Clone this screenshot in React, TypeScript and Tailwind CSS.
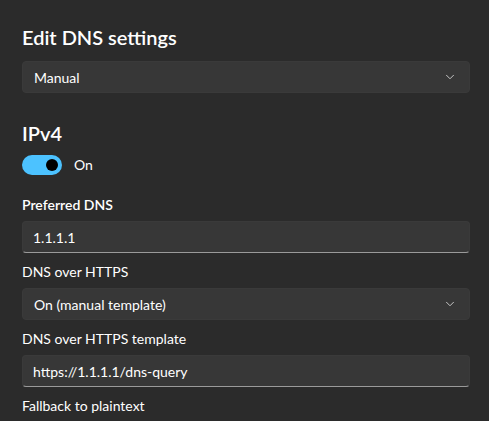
import { ChevronDown } from 'lucide-react';

const font = { fontFamily: 'Lato, "Noto Sans", sans-serif' };

function Select({ value }: { value: string }) {
  return (
    <div className="flex h-[32px] items-center justify-between rounded-[4px] border border-[#3a3a3a] bg-[#373737] pl-[11px] pr-[12px] text-[14px] text-[#ffffff]">
      <span>{value}</span>
      <ChevronDown size={14} strokeWidth={1.6} className="text-[#d0d0d0]" />
    </div>
  );
}

function TextBox({ value }: { value: string }) {
  return (
    <div className="flex h-[32px] items-center rounded-[4px] border border-[#3a3a3a] border-b-[#9a9a9a] bg-[#373737] px-[10px] text-[14px] text-[#ffffff]">
      {value}
    </div>
  );
}

export default function App() {
  return (
    <div className="h-[421px] w-[489px] overflow-hidden bg-[#2b2b2b] pl-[22px] pr-[19px] pt-[23px] text-white" style={font}>
      <h1 className="text-[20px] font-semibold leading-[28px]">Edit DNS settings</h1>
      <div className="mt-[10px]">
        <Select value="Manual" />
      </div>

      <h2 className="mt-[26px] text-[20px] font-semibold leading-[28px]">IPv4</h2>
      <div className="mt-[8px] flex items-center gap-[12px]">
        <div className="flex h-[20px] w-[40px] items-center justify-end rounded-full bg-[#4cc2ff] pr-[4px]">
          <div className="h-[12px] w-[12px] rounded-full bg-black" />
        </div>
        <span className="text-[14px] leading-[20px]">On</span>
      </div>

      <div className="mt-[20px] text-[14px] font-semibold leading-[20px]">Preferred DNS</div>
      <div className="mt-[6px]">
        <TextBox value="1.1.1.1" />
      </div>

      <div className="mt-[9px] text-[14px] leading-[20px]">DNS over HTTPS</div>
      <div className="mt-[6px]">
        <Select value="On (manual template)" />
      </div>

      <div className="mt-[9px] text-[14px] leading-[20px]">DNS over HTTPS template</div>
      <div className="mt-[6px]">
        <TextBox value="https://1.1.1.1/dns-query" />
      </div>

      <div className="mt-[9px] text-[14px] leading-[20px]">Fallback to plaintext</div>
    </div>
  );
}
